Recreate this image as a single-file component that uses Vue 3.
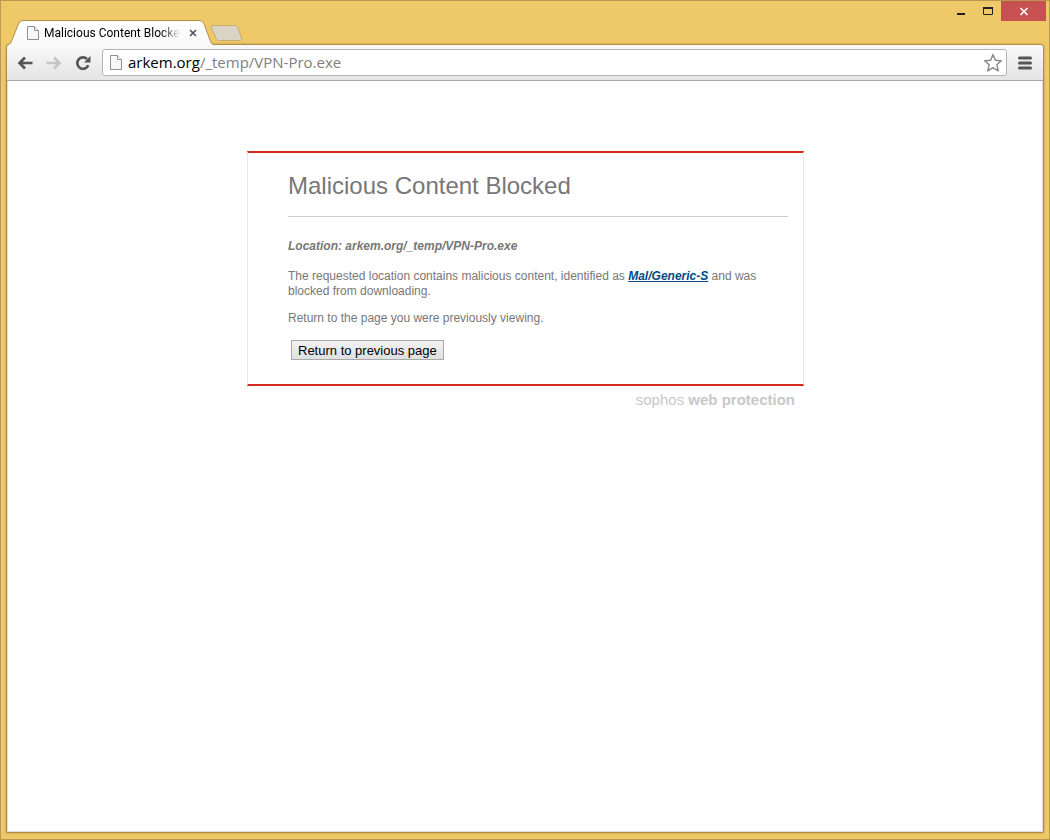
<script setup>
import { ref } from 'vue'

const pageTitle = 'Malicious Content Blocked'
const host = 'arkem.org'
const path = '/_temp/VPN-Pro.exe'
const threat = 'Mal/Generic-S'
const starred = ref(false)
</script>

<template>
  <div class="window">
    <header class="titlebar">
      <div class="tabs">
        <div class="tab">
          <svg class="tab-shape" viewBox="0 0 206 26" aria-hidden="true">
            <defs>
              <linearGradient id="tabfill" x1="0" y1="0" x2="0" y2="1">
                <stop offset="0" stop-color="#ffffff" />
                <stop offset="1" stop-color="#f9f9f9" />
              </linearGradient>
            </defs>
            <path d="M0 26V25C2 24 3 23 4 20L10 5C11.200 2 12.500.500 15 .5H191C194 .5 195.500 2 196.500 5L202 20C203.200 23 204 24.500 206 24.500V26Z" fill="url(#tabfill)" />
            <path d="M0 25C2 24 3 23 4 20L10 5C11.200 2 12.500.500 15 .5H191C194 .5 195.500 2 196.500 5L202 20C203.200 23 204 24.500 206 24.500" fill="none" stroke="#b08f45" />
          </svg>
          <svg class="doc" viewBox="0 0 12 14" aria-hidden="true">
            <path d="M.5.5H7.500L11.500 4.500V13.500H.5Z" fill="#f8f8f8" stroke="#909090" />
            <path d="M7.500.5V4.500H11.500" fill="#fff" stroke="#909090" />
          </svg>
          <span class="tab-title">{{ pageTitle }}</span>
          <button class="tab-close" aria-label="Close tab">
            <svg viewBox="0 0 8 8"><path d="M1 1L7 7M7 1L1 7" stroke="#555" stroke-width="1.700" /></svg>
          </button>
        </div>
        <button class="new-tab" aria-label="New tab">
          <svg viewBox="0 0 34 18">
            <path d="M4.500 1.500H25C27 1.500 28 2 29 4L32.500 14C33 15.800 32.500 16.500 31 16.500H10.500C8.500 16.500 7.500 16 6.800 14L2.500 4C2 2.300 2.500 1.500 4.500 1.500Z" fill="#d9d4c5" stroke="#c5ac73" />
          </svg>
        </button>
      </div>
      <div class="controls">
        <button class="control" aria-label="Minimize">
          <svg viewBox="0 0 26 20"><path d="M10 12H18V14H10Z" fill="#222" /></svg>
        </button>
        <button class="control" aria-label="Maximize">
          <svg viewBox="0 0 26 20"><path d="M10.500 6.500H19.500V13.500H10.500Z" fill="none" stroke="#222" /><path d="M10 6H20V8H10Z" fill="#222" /></svg>
        </button>
        <button class="control close" aria-label="Close">
          <svg viewBox="0 0 45 20"><path d="M19.500 7L26.500 14M26.500 7L19.500 14" stroke="#fff" stroke-width="1.700" /></svg>
        </button>
      </div>
    </header>

    <div class="browser">
      <nav class="toolbar">
        <button class="tool" aria-label="Back">
          <svg viewBox="0 0 16 14"><path d="M15.500 7H3M8 1.500L2.500 7L8 12.500" fill="none" stroke="#555" stroke-width="2.600" /></svg>
        </button>
        <button class="tool" aria-label="Forward" disabled>
          <svg viewBox="0 0 16 14"><path d="M.5 7H13M8 1.500L13.500 7L8 12.500" fill="none" stroke="#c5c5c5" stroke-width="2.600" /></svg>
        </button>
        <button class="tool" aria-label="Reload">
          <svg viewBox="0 0 16 14"><path d="M12 3A5.700 5.700 0 1 0 13.300 9.200" fill="none" stroke="#555" stroke-width="2.600" /><path d="M15.500 0V6.500H9Z" fill="#555" /></svg>
        </button>
        <div class="omnibox">
          <svg class="doc" viewBox="0 0 12 15" aria-hidden="true">
            <path d="M.5.5H7.500L11.500 4.500V14.500H.5Z" fill="#f8f8f8" stroke="#909090" />
            <path d="M7.500.5V4.500H11.500" fill="#fff" stroke="#909090" />
          </svg>
          <div class="url" role="textbox" aria-label="Address" contenteditable="true" spellcheck="false"><span class="host">{{ host }}</span>{{ path }}</div>
          <button class="star" aria-label="Bookmark this page" :aria-pressed="starred" @click="starred = !starred">
            <svg viewBox="0 0 20 20"><path d="M10 1.500L12.300 7.300L18.300 7.700L13.800 11.700L15.300 17.900L10 14.600L4.700 17.900L6.200 11.700L1.700 7.700L7.700 7.300Z" fill="#fff" stroke="#888" stroke-width="1.400" stroke-linejoin="round" /></svg>
          </button>
        </div>
        <button class="menu" aria-label="Menu">
          <svg viewBox="0 0 14 14"><path d="M1.500 2H12.500M1.500 7H12.500M1.500 12H12.500" stroke="#555" stroke-width="3" stroke-linecap="round" /></svg>
        </button>
      </nav>

      <main class="page">
        <div class="notice">
          <section class="card">
            <h1>{{ pageTitle }}</h1>
            <p class="location">Location: {{ host }}{{ path }}</p>
            <p>The requested location contains malicious content, identified as <a href="#threat">{{ threat }}</a> and was blocked from downloading.</p>
            <p>Return to the page you were previously viewing.</p>
            <button class="return">Return to previous page</button>
          </section>
          <footer>sophos <b>web protection</b></footer>
        </div>
      </main>
    </div>
  </div>
</template>

<style>
body {
  margin: 0;
}
</style>

<style scoped>
* {
  box-sizing: border-box;
}
button {
  padding: 0;
  border: 0;
  background: none;
}
svg {
  display: block;
}
.window {
  display: flex;
  flex-direction: column;
  min-height: 100vh;
  padding: 0 5px 6px;
  border: 1px solid #b8994f;
  background: #efc868;
  font-family: "Open Sans", "Noto Sans", sans-serif;
}
.titlebar {
  display: flex;
  justify-content: space-between;
  height: 43px;
  margin-right: -2px;
}
.tabs {
  display: flex;
  align-items: flex-end;
}
.tab {
  position: relative;
  z-index: 1;
  display: flex;
  align-items: center;
  width: 206px;
  height: 26px;
  margin: 0 0 -2px 2px;
  padding: 0 12px 0 19px;
}
.tab-shape {
  position: absolute;
  inset: 0;
  width: 206px;
  height: 26px;
}
.doc {
  position: relative;
  flex: none;
  width: 12px;
  height: 14px;
}
.tab-title {
  position: relative;
  flex: 1;
  margin-left: 5px;
  overflow: hidden;
  white-space: nowrap;
  font-family: Roboto, "Open Sans", sans-serif;
  font-size: 12px;
  line-height: 20px;
  color: #000;
  -webkit-mask-image: linear-gradient(to right, #000 85%, transparent);
  mask-image: linear-gradient(to right, #000 85%, transparent);
}
.tab-close {
  position: relative;
  width: 8px;
  margin: 0 5px 0 8px;
}
.tab-close svg {
  width: 8px;
  height: 8px;
}
.new-tab {
  margin: 0 0 2px -5px;
}
.new-tab svg {
  width: 34px;
  height: 18px;
}
.controls {
  display: flex;
  align-items: flex-start;
}
.control svg {
  width: 26px;
  height: 20px;
}
.close {
  margin-left: 2px;
  background: #c75050;
}
.close svg {
  width: 45px;
}
.browser {
  flex: 1;
  display: flex;
  flex-direction: column;
  border: 1px solid #b08f45;
  border-radius: 4px 4px 1px 1px;
  background: #fff;
  box-shadow: 0 0 2px rgba(120, 90, 20, 0.6);
}
.toolbar {
  display: flex;
  align-items: center;
  height: 36px;
  padding: 0 11px 0 10px;
  border-bottom: 1px solid #a8a8a8;
  border-radius: 3px 3px 0 0;
  background: linear-gradient(#f9f9f9, #e4e4e4);
}
.tool {
  margin-right: 13px;
}
.tool svg {
  width: 16px;
  height: 14px;
}
.omnibox {
  flex: 1;
  display: flex;
  align-items: center;
  height: 27px;
  margin: 0 11px 0 -2px;
  padding: 0 3px 0 7px;
  border: 1px solid #b4b4b4;
  border-radius: 3px;
  background: #fff;
}
.omnibox .doc {
  height: 15px;
}
.url {
  flex: 1;
  margin-left: 6px;
  padding-bottom: 2px;
  font-size: 15px;
  line-height: 22px;
  white-space: nowrap;
  color: #808080;
  outline: none;
}
.host {
  color: #000;
}
.star svg {
  width: 20px;
  height: 20px;
}
.menu svg {
  width: 14px;
  height: 14px;
}
.page {
  flex: 1;
  padding: 70px 20px 20px 21px;
  border: 1px solid #ddd;
  border-top: 0;
  font-family: "Liberation Sans", Arial, sans-serif;
  font-size: 12px;
  line-height: 15px;
  color: #777;
}
.notice {
  max-width: 557px;
  margin: 0 auto;
}
.card {
  padding: 18px 15px 24px 40px;
  border: 1px solid #e8e8e8;
  border-top: 2px solid #d52b1e;
  border-bottom: 2px solid #d52b1e;
}
h1 {
  margin: 0 0 22px;
  padding-bottom: 15px;
  border-bottom: 1px solid #ccc;
  font-size: 24px;
  font-weight: 400;
  line-height: 30px;
}
p {
  margin: 0 0 12px;
}
.location {
  margin-bottom: 15px;
  font-weight: 700;
  font-style: italic;
}
a {
  color: #004b85;
  font-weight: 700;
  font-style: italic;
}
.return {
  display: block;
  height: 20px;
  margin: 14px 0 0 3px;
  padding: 1px 6px 0;
  border: 1px solid #a9a9a9;
  background: linear-gradient(#f2f2f2, #e0e0e0);
  font-family: inherit;
  font-size: 13px;
  line-height: 18px;
  color: #000;
}
footer {
  padding: 5px 9px 0 0;
  text-align: right;
  font-size: 15px;
  line-height: 18px;
  color: #c8c8c8;
}
</style>
